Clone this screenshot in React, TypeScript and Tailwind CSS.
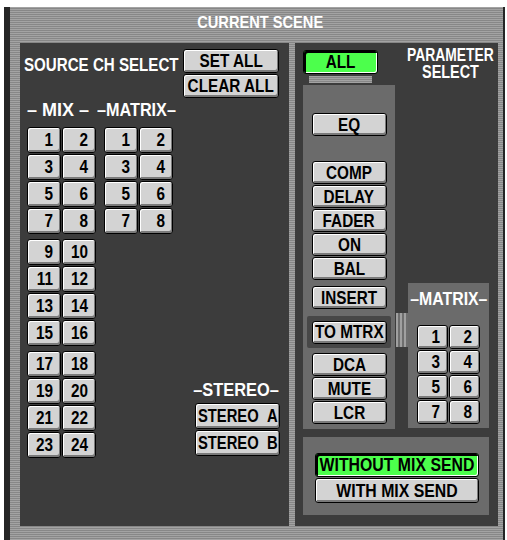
import React from 'react'

// horizontal stripes used by the console frame
const stripes =
  'bg-[repeating-linear-gradient(180deg,#a3a3a3_0px,#a3a3a3_1px,#878787_1px,#878787_2px)]'
const vstripes =
  'bg-[repeating-linear-gradient(90deg,#a0a0a0_0px,#a0a0a0_2px,#6e6e6e_2px,#6e6e6e_4px)]'

// condensed label text (the console font is a narrow bitmap face)
const T: React.FC<{ children: React.ReactNode; className?: string }> = ({ children, className = 'scale-x-[0.85]' }) => (
  <span className={`inline-block shrink-0 whitespace-nowrap ${className}`}>{children}</span>
)

interface BtnProps {
  children: React.ReactNode
  className?: string
  active?: boolean
}

const Btn: React.FC<BtnProps> = ({ children, className = '', active = false }) => (
  <div
    className={`flex items-center rounded-[3px] border border-black text-[18px] font-bold leading-none text-black ${
      active
        ? 'bg-[#4cff4c] shadow-[inset_2px_2px_0_#000,inset_-1px_-1px_0_#fff]'
        : 'bg-[#d3d3d3] shadow-[inset_1px_1px_0_#fff,inset_-1px_-2px_0_#7a7a7a]'
    } ${className}`}
  >
    {children}
  </div>
)

const NumBtn: React.FC<{ n: number; w?: string; h?: string }> = ({ n, w = 'w-[34px]', h = 'h-[26px]' }) => (
  <Btn className={`${w} ${h} justify-end pr-[7px]`}>
    <T className="origin-right scale-x-[0.85]">{n}</T>
  </Btn>
)

const NumGrid: React.FC<{ from: number; w?: string; h?: string }> = ({ from, w, h }) => (
  <div className="grid grid-cols-2 gap-[1px]">
    {Array.from({ length: 8 }, (_, i) => (
      <NumBtn key={i} n={from + i} w={w} h={h} />
    ))}
  </div>
)

const StereoBtn: React.FC<{ side: string }> = ({ side }) => (
  <Btn className="h-[26px] w-[85px] justify-start pl-[2px]">
    <T className="origin-left scale-x-[0.82]">{`STEREO\u00a0\u00a0${side}`}</T>
  </Btn>
)

const LeftPanel = () => (
  <div className="flex h-[483px] w-[269px] flex-col bg-[#3c3c3c]">
    {/* Header */}
    <div className="flex pl-[4px] pt-[6px]">
      <div className="w-[159px] pt-[7px] text-[18px] font-bold leading-none text-white">
        <T className="origin-left scale-x-[0.84]">SOURCE CH SELECT</T>
      </div>
      <div className="flex flex-col gap-[1px]">
        <Btn className="h-[24px] w-[96px] justify-center">
          <T>SET ALL</T>
        </Btn>
        <Btn className="h-[24px] w-[96px] justify-center">
          <T>CLEAR ALL</T>
        </Btn>
      </div>
    </div>

    {/* Group labels */}
    <div className="flex h-[29px] items-center pb-[6px] pl-[7px] text-[18px] font-bold leading-none text-white">
      <div className="w-[70px]">
        <T className="origin-left scale-x-100">– MIX –</T>
      </div>
      <T className="origin-left scale-x-[0.9]">–MATRIX–</T>
    </div>

    <div className="flex pl-[7px]">
      <div className="flex flex-col gap-[5px]">
        <NumGrid from={1} />
        <NumGrid from={9} />
        <NumGrid from={17} />
      </div>
      <div className="ml-[8px]">
        <NumGrid from={1} />
      </div>
      <div className="flex flex-1 flex-col items-end pr-[9px] pt-[253px]">
        <div className="flex h-[20px] w-[87px] items-center justify-center text-[18px] font-bold leading-none text-white">
          <T className="scale-x-[0.91]">–STEREO–</T>
        </div>
        <div className="mt-[3px] flex flex-col gap-[1px]">
          <StereoBtn side="A" />
          <StereoBtn side="B" />
        </div>
      </div>
    </div>
  </div>
)

const ParamBtn: React.FC<{ label: string; className?: string }> = ({ label, className = '' }) => (
  <Btn className={`h-[23px] w-[75px] justify-center ${className}`}>
    <T>{label}</T>
  </Btn>
)

const RightPanel = () => (
  <div className="flex h-[483px] w-[203px] flex-col bg-[#3c3c3c] pl-[8px]">
    {/* Top row */}
    <div className="flex h-[42px]">
      <div className="flex w-[92px] flex-col items-center pt-[7px]">
        <Btn active className="h-[24px] w-[75px] justify-center">
          <T>ALL</T>
        </Btn>
        <div className={`mt-[2px] h-[7px] w-[63px] ${stripes}`} />
      </div>
      <div className="flex flex-1 flex-col items-center pl-[16px] pt-[4px] text-[18px] font-bold leading-[17px] text-white">
        <T className="scale-x-[0.77]">PARAMETER</T>
        <T className="scale-x-[0.8]">SELECT</T>
      </div>
    </div>

    {/* Parameter buttons + matrix */}
    <div className="flex items-start">
      <div className="flex h-[344px] w-[92px] flex-col items-center bg-[#6b6b6b] pt-[28px]">
        <ParamBtn label="EQ" />
        <div className="mt-[25px] flex flex-col gap-[1px]">
          <ParamBtn label="COMP" />
          <ParamBtn label="DELAY" />
          <ParamBtn label="FADER" />
          <ParamBtn label="ON" />
          <ParamBtn label="BAL" />
        </div>
        <ParamBtn label="INSERT" className="mt-[6px]" />
        <div className="mt-[7px] flex h-[32px] w-[84px] items-center justify-center rounded-[2px] bg-[#474747]">
          <ParamBtn label="TO MTRX" />
        </div>
        <div className="mt-[5px] flex flex-col gap-[1px]">
          <ParamBtn label="DCA" />
          <ParamBtn label="MUTE" />
          <ParamBtn label="LCR" />
        </div>
      </div>
      <div className={`ml-[1px] mt-[228px] h-[34px] w-[12px] ${vstripes}`} />
      <div className="mt-[198px] flex h-[145px] w-[81px] flex-col items-center bg-[#6b6b6b]">
        <div className="flex h-[31px] items-center text-[18px] font-bold leading-none text-white">
          <T className="scale-x-[0.88]">–MATRIX–</T>
        </div>
        <div className="mt-[11px]">
          <NumGrid from={1} w="w-[31px]" h="h-[24px]" />
        </div>
      </div>
    </div>

    {/* Mix send */}
    <div className="mt-[8px] flex h-[78px] w-[186px] flex-col bg-[#6b6b6b] pl-[12px] pt-[16px]">
      <Btn active className="h-[24px] w-[164px] justify-center">
        <T className="scale-x-[0.88]">WITHOUT MIX SEND</T>
      </Btn>
      <Btn className="mt-[1px] h-[25px] w-[164px] justify-center">
        <T className="scale-x-[0.88]">WITH MIX SEND</T>
      </Btn>
    </div>
  </div>
)

export default function App() {
  return (
    <div className="h-[540px] w-[507px] bg-white pl-[4px] pr-[2px] pt-[7px] font-['Liberation_Sans',Arial,sans-serif]">
      <div className={`flex h-full flex-col border-l-[6px] border-r-2 border-[#262626] ${stripes}`}>
        <div className="flex h-[36px] items-center justify-center pb-[6px] pl-[8px] text-[17px] font-bold leading-none text-white">
          <T className="scale-x-[0.86]">CURRENT SCENE</T>
        </div>
        <div className="flex gap-[6px] pl-[10px]">
          <LeftPanel />
          <RightPanel />
        </div>
      </div>
    </div>
  )
}
